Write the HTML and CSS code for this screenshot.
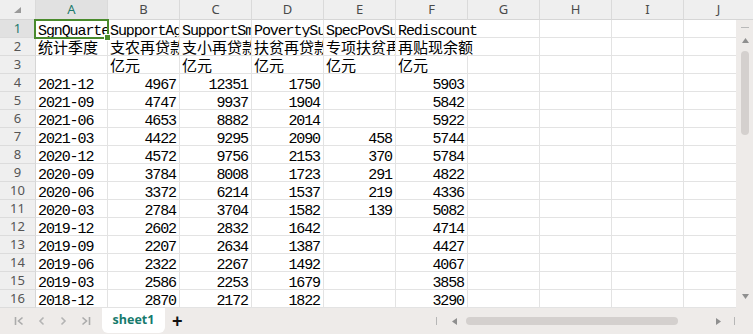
FILE: index.html
```html
<!DOCTYPE html>
<html>
<head>
<meta charset="utf-8">
<link rel="stylesheet" href="styles.css">
</head>
<body>
<div class="sheet">
  <div class="colhead">
    <div class="hc corner"><svg width="7" height="6" viewBox="0 0 7 6"><polygon points="7,0 7,6 0,6" fill="#9a9a9a"/></svg></div>
    <div class="hc sel">A</div>
    <div class="hc">B</div>
    <div class="hc">C</div>
    <div class="hc">D</div>
    <div class="hc">E</div>
    <div class="hc">F</div>
    <div class="hc">G</div>
    <div class="hc">H</div>
    <div class="hc">I</div>
    <div class="hc last">J</div>
  </div>
  <div class="main">
    <div class="grid">
      <div class="selection"><span class="handle"></span></div>

      <div class="rh sel">1</div>
      <div class="c">SgnQuarter</div><div class="c">SupportAgri</div><div class="c">SupportSmall</div><div class="c">PovertySupport</div><div class="c">SpecPovSupport</div><div class="c spill">Rediscount</div><div class="c"></div><div class="c"></div><div class="c"></div><div class="c"></div>

      <div class="rh">2</div>
      <div class="c cjk">统计季度</div><div class="c cjk">支农再贷款</div><div class="c cjk">支小再贷款</div><div class="c cjk">扶贫再贷款</div><div class="c cjk">专项扶贫再贷款</div><div class="c cjk spill">再贴现余额</div><div class="c"></div><div class="c"></div><div class="c"></div><div class="c"></div>

      <div class="rh">3</div>
      <div class="c"></div><div class="c cjk">亿元</div><div class="c cjk">亿元</div><div class="c cjk">亿元</div><div class="c cjk">亿元</div><div class="c cjk">亿元</div><div class="c"></div><div class="c"></div><div class="c"></div><div class="c"></div>

      <div class="rh">4</div>
      <div class="c">2021-12</div><div class="c n">4967</div><div class="c n">12351</div><div class="c n">1750</div><div class="c n"></div><div class="c n">5903</div><div class="c"></div><div class="c"></div><div class="c"></div><div class="c"></div>

      <div class="rh">5</div>
      <div class="c">2021-09</div><div class="c n">4747</div><div class="c n">9937</div><div class="c n">1904</div><div class="c n"></div><div class="c n">5842</div><div class="c"></div><div class="c"></div><div class="c"></div><div class="c"></div>

      <div class="rh">6</div>
      <div class="c">2021-06</div><div class="c n">4653</div><div class="c n">8882</div><div class="c n">2014</div><div class="c n"></div><div class="c n">5922</div><div class="c"></div><div class="c"></div><div class="c"></div><div class="c"></div>

      <div class="rh">7</div>
      <div class="c">2021-03</div><div class="c n">4422</div><div class="c n">9295</div><div class="c n">2090</div><div class="c n">458</div><div class="c n">5744</div><div class="c"></div><div class="c"></div><div class="c"></div><div class="c"></div>

      <div class="rh">8</div>
      <div class="c">2020-12</div><div class="c n">4572</div><div class="c n">9756</div><div class="c n">2153</div><div class="c n">370</div><div class="c n">5784</div><div class="c"></div><div class="c"></div><div class="c"></div><div class="c"></div>

      <div class="rh">9</div>
      <div class="c">2020-09</div><div class="c n">3784</div><div class="c n">8008</div><div class="c n">1723</div><div class="c n">291</div><div class="c n">4822</div><div class="c"></div><div class="c"></div><div class="c"></div><div class="c"></div>

      <div class="rh">10</div>
      <div class="c">2020-06</div><div class="c n">3372</div><div class="c n">6214</div><div class="c n">1537</div><div class="c n">219</div><div class="c n">4336</div><div class="c"></div><div class="c"></div><div class="c"></div><div class="c"></div>

      <div class="rh">11</div>
      <div class="c">2020-03</div><div class="c n">2784</div><div class="c n">3704</div><div class="c n">1582</div><div class="c n">139</div><div class="c n">5082</div><div class="c"></div><div class="c"></div><div class="c"></div><div class="c"></div>

      <div class="rh">12</div>
      <div class="c">2019-12</div><div class="c n">2602</div><div class="c n">2832</div><div class="c n">1642</div><div class="c n"></div><div class="c n">4714</div><div class="c"></div><div class="c"></div><div class="c"></div><div class="c"></div>

      <div class="rh">13</div>
      <div class="c">2019-09</div><div class="c n">2207</div><div class="c n">2634</div><div class="c n">1387</div><div class="c n"></div><div class="c n">4427</div><div class="c"></div><div class="c"></div><div class="c"></div><div class="c"></div>

      <div class="rh">14</div>
      <div class="c">2019-06</div><div class="c n">2322</div><div class="c n">2267</div><div class="c n">1492</div><div class="c n"></div><div class="c n">4067</div><div class="c"></div><div class="c"></div><div class="c"></div><div class="c"></div>

      <div class="rh">15</div>
      <div class="c">2019-03</div><div class="c n">2586</div><div class="c n">2253</div><div class="c n">1679</div><div class="c n"></div><div class="c n">3858</div><div class="c"></div><div class="c"></div><div class="c"></div><div class="c"></div>

      <div class="rh">16</div>
      <div class="c">2018-12</div><div class="c n">2870</div><div class="c n">2172</div><div class="c n">1822</div><div class="c n"></div><div class="c n">3290</div><div class="c"></div><div class="c"></div><div class="c"></div><div class="c"></div>
    </div>
    <div class="vscroll">
      <span class="vline"></span>
      <svg class="varrow" width="7" height="5" viewBox="0 0 7 5"><polygon points="3.5,0 7,5 0,5" fill="#8f8f8f"/></svg>
      <span class="vthumb"></span>
      <span class="vspace"></span>
      <svg class="varrow" width="7" height="5" viewBox="0 0 7 5"><polygon points="0,0 7,0 3.5,5" fill="#8f8f8f"/></svg>
    </div>
  </div>
  <div class="tabbar">
    <div class="nav">
      <svg width="10" height="10" viewBox="0 0 10 10"><path d="M1.5 1v8M8.5 1.5L4.5 5l4 3.5" fill="none" stroke="#ababab" stroke-width="1.6"/></svg>
      <svg width="7" height="10" viewBox="0 0 7 10"><path d="M5.5 1.5L2 5l3.5 3.5" fill="none" stroke="#b4b4b4" stroke-width="1.6"/></svg>
      <svg width="7" height="10" viewBox="0 0 7 10"><path d="M1.5 1.5L5 5 1.5 8.5" fill="none" stroke="#b4b4b4" stroke-width="1.6"/></svg>
      <svg width="10" height="10" viewBox="0 0 10 10"><path d="M1.5 1.5l4 3.5-4 3.5M8.5 1v8" fill="none" stroke="#ababab" stroke-width="1.6"/></svg>
    </div>
    <div class="tab">sheet1</div>
    <div class="add">+</div>
    <div class="hscroll">
      <span class="hline"></span>
      <svg class="harrow" width="5" height="7" viewBox="0 0 5 7"><polygon points="0,3.5 5,0 5,7" fill="#8f8f8f"/></svg>
      <span class="hthumb"></span>
      <svg class="harrow r" width="5" height="7" viewBox="0 0 5 7"><polygon points="0,0 5,3.5 0,7" fill="#8f8f8f"/></svg>
      <span class="hline last"></span>
    </div>
  </div>
</div>
</body>
</html>
```
FILE: styles.css
```css
html, body {
  margin: 0;
  padding: 0;
  background: #ffffff;
}

.sheet {
  width: 753px;
  height: 334px;
  display: flex;
  flex-direction: column;
  overflow: hidden;
}

/* column header */
.colhead {
  display: grid;
  grid-template-columns: 36px repeat(9, 72px) 69px;
  height: 20px;
  background: #efefef;
}
.hc {
  box-sizing: border-box;
  height: 20px;
  border-right: 1px solid #dadada;
  border-bottom: 1px solid #d6d6d6;
  font-family: "Noto Sans", "Open Sans", sans-serif;
  font-size: 13px;
  line-height: 19px;
  color: #4a4a4a;
  text-align: center;
}
.hc.corner {
  display: flex;
  align-items: center;
  justify-content: center;
  padding: 1px 0 0 0;
}
.hc.sel {
  background: #e1e1e1;
  color: #1c7a6c;
}
.hc.last {
  border-right: none;
}

/* body */
.main {
  display: flex;
  height: 288px;
}
.grid {
  position: relative;
  width: 736px;
  display: grid;
  grid-template-columns: 36px repeat(9, 72px) 52px;
  grid-auto-rows: 18px;
}
.rh {
  box-sizing: border-box;
  background: #efefef;
  border-right: 1px solid #d6d6d6;
  border-bottom: 1px solid #dcdcdc;
  font-family: "Noto Sans", "Open Sans", sans-serif;
  font-size: 13px;
  line-height: 17px;
  color: #555555;
  text-align: center;
}
.rh.sel {
  background: #e1e1e1;
  color: #1c7a6c;
}
.c {
  box-sizing: border-box;
  border-right: 1px solid #e3e3e3;
  border-bottom: 1px solid #e3e3e3;
  padding: 3px 0 0 2px;
  font-family: "Liberation Mono", "Noto Sans CJK SC", monospace;
  font-size: 15px;
  letter-spacing: -1.1px;
  line-height: 18px;
  color: #000000;
  white-space: nowrap;
  overflow: hidden;
}
.c:nth-child(11n + 1) {
  border-right: none;
}
.c.n {
  text-align: right;
  padding-right: 3px;
  padding-left: 0;
}
.c.cjk {
  font-family: "Noto Sans CJK SC", sans-serif;
  font-size: 15px;
  letter-spacing: 0;
  line-height: 17px;
  padding-top: 0;
}
.c.spill {
  overflow: visible;
  border-right-color: transparent;
}

.selection {
  position: absolute;
  top: -1px;
  left: 34px;
  width: 75px;
  height: 20px;
  box-sizing: border-box;
  border: 2px solid #4a8a2c;
  pointer-events: none;
}
.handle {
  position: absolute;
  right: -4px;
  bottom: -4px;
  width: 5px;
  height: 5px;
  background: #4a8a2c;
  border: 1px solid #ffffff;
}

/* vertical scrollbar */
.vscroll {
  width: 17px;
  background: #eeebe9;
  display: flex;
  flex-direction: column;
  align-items: center;
  padding-top: 7px;
  box-sizing: border-box;
}
.vline {
  width: 8px;
  height: 1px;
  background: #b9b9b9;
  margin-left: 1px;
}
.varrow {
  margin-top: 10px;
  margin-left: 1px;
}
.vthumb {
  width: 8px;
  height: 84px;
  margin-top: 8px;
  margin-left: 1px;
  border-radius: 4px;
  background: #d4d0ce;
}
.vspace {
  flex: 1;
}
.varrow:last-child {
  margin-top: 0;
  margin-bottom: 9px;
}

/* tab bar */
.tabbar {
  height: 26px;
  background: #eeebe9;
  display: flex;
  align-items: stretch;
}
.nav {
  display: flex;
  align-items: center;
  padding-left: 14px;
  width: 102px;
  box-sizing: border-box;
}
.nav svg:nth-child(1) { margin-right: 14px; }
.nav svg:nth-child(2) { margin-right: 15px; }
.nav svg:nth-child(3) { margin-right: 14px; }
.tab {
  width: 63px;
  background: #ffffff;
  border-radius: 0 0 6px 6px;
  font-family: "Open Sans", "Noto Sans", sans-serif;
  font-weight: 700;
  font-size: 12.5px;
  color: #167a6d;
  text-align: center;
  line-height: 24px;
  margin-bottom: 1px;
}
.add {
  font-family: "Liberation Sans", sans-serif;
  font-weight: 700;
  font-size: 18px;
  line-height: 26px;
  color: #111111;
  padding-left: 7px;
}
.hscroll {
  margin-left: auto;
  width: 317px;
  display: flex;
  align-items: center;
}
.hline {
  width: 1px;
  height: 8px;
  background: #b6b6b6;
}
.harrow {
  margin-left: 15px;
}
.hthumb {
  width: 212px;
  height: 8px;
  border-radius: 4px;
  background: #d4d0ce;
  margin-left: 9px;
}
.harrow.r {
  margin-left: 38px;
}
.hline.last {
  margin-left: 13px;
}
```
